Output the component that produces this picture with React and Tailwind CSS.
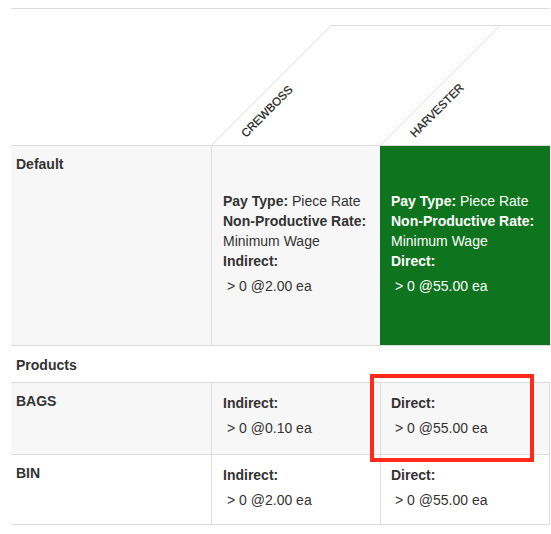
const font = { fontFamily: '"Liberation Sans", Arial, Helvetica, sans-serif' };

function Rate({ label, value, className = "" }) {
  return (
    <div className={className}>
      <div className="font-bold">{label}</div>
      <div className="mt-[5px] pl-[4px]">&gt; 0 @{value} ea</div>
    </div>
  );
}

function SlantHeader({ title }) {
  return (
    <div className="relative h-full">
      <div className="absolute left-0 bottom-0 w-[169px] h-[120px] origin-bottom-left -skew-x-45 border-l border-t border-[#dcdcdc]" />
      <span className="absolute left-[37px] bottom-[5px] origin-bottom-left -rotate-45 whitespace-nowrap text-[11.5px] leading-[14px] text-[#222] [-webkit-text-stroke:0.25px_#222]">
        {title}
      </span>
    </div>
  );
}

function PayDetails({ kind, value }) {
  return (
    <div>
      <div>
        <span className="font-bold">Pay Type:</span> Piece Rate
      </div>
      <div className="font-bold">Non-Productive Rate:</div>
      <div>Minimum Wage</div>
      <Rate label={kind} value={value} />
    </div>
  );
}

export default function App() {
  return (
    <div className="w-[551px] h-[534px] overflow-hidden bg-white text-[14px] leading-5 text-[#333]" style={font}>
      <div className="ml-[11px] mt-[8px] w-[539px]">
        {/* header */}
        <div className="grid grid-cols-[200px_169px_170px] h-[138px] border-t border-b border-[#dcdcdc]">
          <div />
          <SlantHeader title="CREWBOSS" />
          <SlantHeader title="HARVESTER" />
        </div>

        {/* default row */}
        <div className="grid grid-cols-[200px_169px_170px] h-[200px] border-b border-[#dcdcdc]">
          <div className="bg-[#f7f7f7] pl-[5px] pt-[8px] font-bold">Default</div>
          <div className="bg-[#f7f7f7] border-l border-[#dcdcdc] pl-[11px] flex items-center pb-[4px]">
            <PayDetails kind="Indirect:" value="2.00" />
          </div>
          <div className="bg-[#0e741d] text-white pl-[11px] flex items-center pb-[4px]">
            <PayDetails kind="Direct:" value="55.00" />
          </div>
        </div>

        {/* products heading */}
        <div className="h-[37px] border-b border-[#dcdcdc] pl-[5px] pt-[9px] font-bold">Products</div>

        {/* BAGS */}
        <div className="grid grid-cols-[200px_169px_170px] h-[72px] border-b border-[#dcdcdc] bg-[#f7f7f7]">
          <div className="pl-[5px] pt-[8px] font-bold">BAGS</div>
          <div className="border-l border-[#dcdcdc] pl-[11px] pt-[10px]">
            <Rate label="Indirect:" value="0.10" />
          </div>
          <div className="relative border-l border-r border-[#dcdcdc] pl-[10px] pt-[10px]">
            <Rate label="Direct:" value="55.00" />
            <div className="absolute left-[-11px] top-[-9px] w-[164px] h-[88px] border-[4.5px] border-[#ff2a1c]" />
          </div>
        </div>

        {/* BIN */}
        <div className="grid grid-cols-[200px_169px_170px] h-[70px] border-b border-[#dcdcdc]">
          <div className="pl-[5px] pt-[8px] font-bold">BIN</div>
          <div className="border-l border-[#dcdcdc] pl-[11px] pt-[10px]">
            <Rate label="Indirect:" value="2.00" />
          </div>
          <div className="border-l border-r border-[#dcdcdc] pl-[10px] pt-[10px]">
            <Rate label="Direct:" value="55.00" />
          </div>
        </div>
      </div>
    </div>
  );
}
